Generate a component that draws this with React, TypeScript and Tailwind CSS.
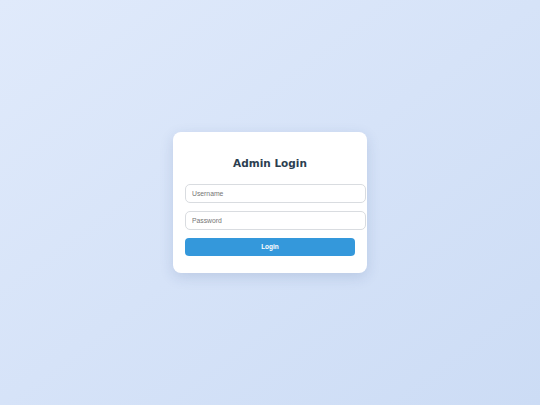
import React from "react";

export default function App() {
  return (
    <div className="w-[540px] h-[405px] bg-gradient-to-br from-[#e0eafb] to-[#ccdcf5] flex items-center justify-center">
      <div className="w-[194px] bg-white rounded-[8px] shadow-[0_4px_14px_rgba(40,70,120,0.15)] px-[12px] pt-[12px] pb-[17px] flex flex-col">
        <h2 className="mt-[11px] mb-[13px] text-center text-[10.5px] leading-[16px] font-bold text-[#2c3e50] [font-family:'DejaVu_Sans',sans-serif]">
          Admin Login
        </h2>
        <input
          placeholder="Username"
          className="w-[181px] h-[19px] border border-[#d9dce0] rounded-[5px] px-[6px] text-[6.8px] text-[#333] placeholder:text-[#757575] [font-family:'Liberation_Sans',Arial,sans-serif] outline-none"
        />
        <input
          type="password"
          placeholder="Password"
          className="mt-[8px] w-[181px] h-[19px] border border-[#d9dce0] rounded-[5px] px-[6px] text-[6.8px] text-[#333] placeholder:text-[#757575] [font-family:'Liberation_Sans',Arial,sans-serif] outline-none"
        />
        <button className="mt-[8px] w-full h-[18px] bg-[#3498db] text-white rounded-[4px] text-[6.5px] font-bold [font-family:'Liberation_Sans',Arial,sans-serif]">
          Login
        </button>
      </div>
    </div>
  );
}
